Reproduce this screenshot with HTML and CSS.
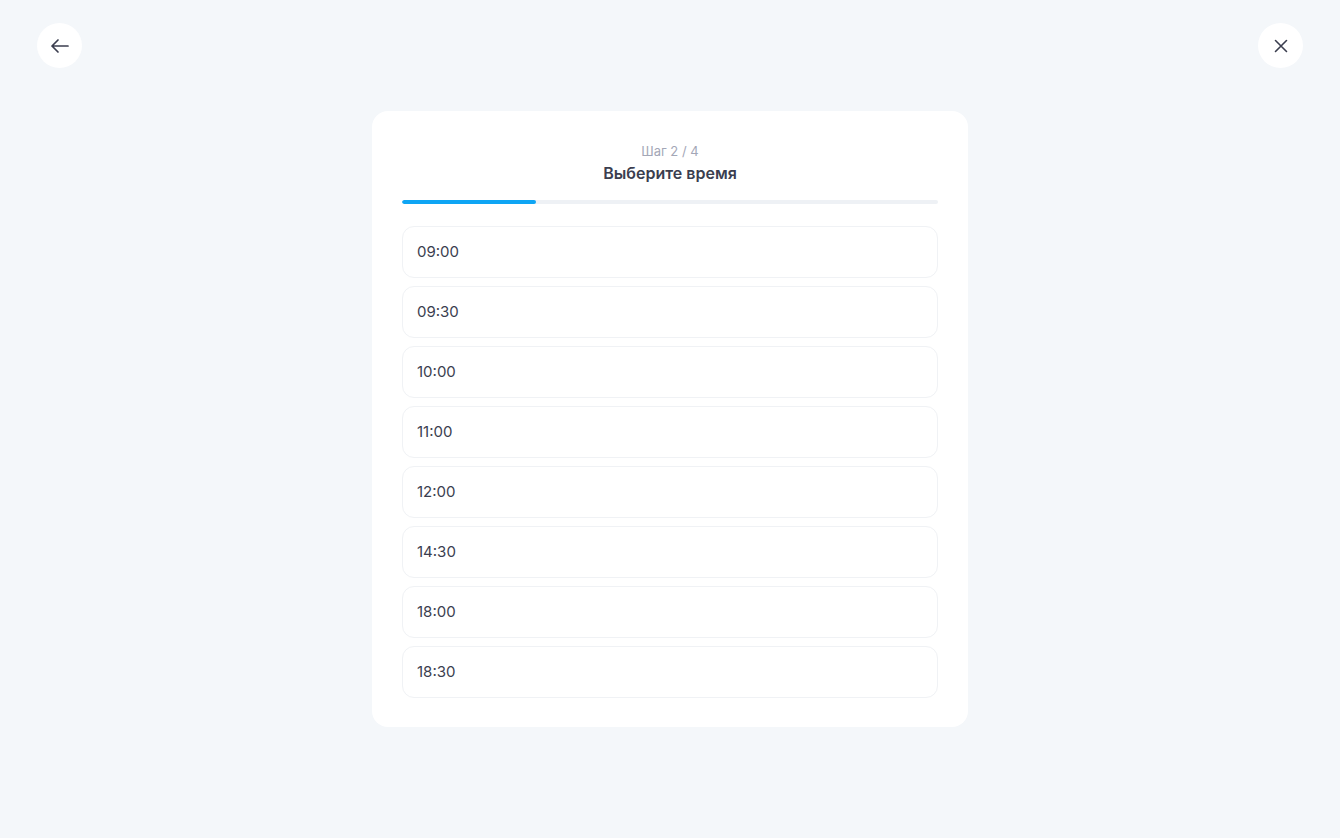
FILE: index.html
```html
<!DOCTYPE html>
<html lang="ru">
<head>
<meta charset="utf-8">
<title>Выберите время</title>
<link rel="stylesheet" href="styles.css">
</head>
<body>
<div class="page">
  <button class="round-btn back" aria-label="Назад">
    <svg width="24" height="24" viewBox="0 0 24 24" fill="none" stroke="#3b3e4f" stroke-width="1.7" stroke-linecap="round" stroke-linejoin="round"><path d="M20 12H4M10 6l-6 6 6 6"/></svg>
  </button>
  <button class="round-btn close" aria-label="Закрыть">
    <svg width="16" height="16" viewBox="0 0 16 16" fill="none" stroke="#3b3e4f" stroke-width="1.6" stroke-linecap="round"><path d="M2.5 2.5l11 11M13.5 2.5l-11 11"/></svg>
  </button>
  <main class="card">
    <div class="step">Шаг 2 / 4</div>
    <h1 class="title">Выберите время</h1>
    <div class="progress"><div class="progress-fill" style="width:25%"></div></div>
    <ul class="slots">
      <li class="slot">09:00</li>
      <li class="slot">09:30</li>
      <li class="slot">10:00</li>
      <li class="slot">11:00</li>
      <li class="slot">12:00</li>
      <li class="slot">14:30</li>
      <li class="slot">18:00</li>
      <li class="slot">18:30</li>
    </ul>
  </main>
</div>
</body>
</html>
```

FILE: styles.css
```css
* { box-sizing: border-box; }
html, body { margin: 0; padding: 0; }
body {
  background: #f4f7fa;
  font-family: "Inter", "Noto Sans", sans-serif;
  color: #3b3e4f;
}
.page {
  position: relative;
  min-height: 838px;
  display: flex;
  align-items: center;
  justify-content: center;
}
.round-btn {
  position: absolute;
  top: 23px;
  width: 45px;
  height: 45px;
  border-radius: 50%;
  border: none;
  background: #ffffff;
  display: flex;
  align-items: center;
  justify-content: center;
  padding: 0;
  cursor: pointer;
}
.round-btn.back { left: 37px; }
.round-btn.close { right: 37px; }
.card {
  width: 596px;
  background: #ffffff;
  border-radius: 16px;
  padding: 30px 30px 29px;
}
.step {
  text-align: center;
  font-size: 13px;
  line-height: 20px;
  color: #a3a7b7;
}
.title {
  margin: 1px 0 0;
  text-align: center;
  font-size: 16px;
  line-height: 22px;
  font-weight: 600;
  color: #3b3e4f;
}
.progress {
  margin-top: 16px;
  height: 4px;
  border-radius: 2px;
  background: #eef1f5;
  overflow: hidden;
}
.progress-fill {
  height: 100%;
  border-radius: 2px;
  background: #0ea5f4;
}
.slots {
  list-style: none;
  margin: 22px 0 0;
  padding: 0;
  display: flex;
  flex-direction: column;
  gap: 8px;
}
.slot {
  height: 52px;
  border: 1px solid #f0f2f5;
  border-radius: 12px;
  padding: 0 14px 1px;
  display: flex;
  align-items: center;
  font-size: 15px;
  color: #3b3e4f;
}
```
